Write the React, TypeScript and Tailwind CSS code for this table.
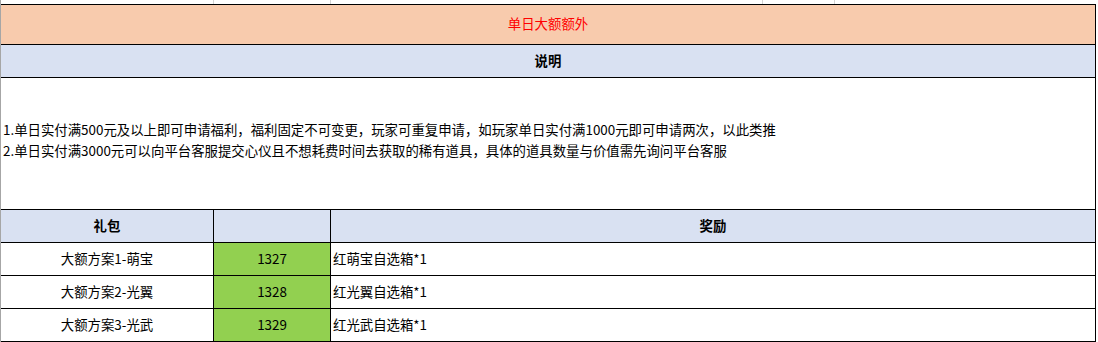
const rows = [
  { name: '大额方案1-萌宝', id: '1327', reward: '红萌宝自选箱*1' },
  { name: '大额方案2-光翼', id: '1328', reward: '红光翼自选箱*1' },
  { name: '大额方案3-光武', id: '1329', reward: '红光武自选箱*1' },
];

export default function App() {
  return (
    <div
      className="w-[1098px] h-[342px] bg-white border-l border-[#a6a6a6] text-[13.4px] text-black overflow-hidden"
      style={{ fontFamily: '"Microsoft YaHei", "Noto Sans CJK SC", "Noto Sans", sans-serif' }}
    >
      {/* sheet grid lines above the table */}
      <div className="flex h-[4px]">
        <div className="w-[213px] border-r border-[#d4d4d4]" />
        <div className="w-[117px] border-r border-[#d4d4d4]" />
        <div className="w-[432px] border-r border-[#d4d4d4]" />
        <div className="w-[72px] border-r border-[#d4d4d4]" />
      </div>

      <div className="w-[1095px] border-t border-r border-black">
        <div className="h-[40px] bg-[#f8cbad] border-b border-black flex items-center justify-center pb-[3px] text-[#ff0000]">
          单日大额额外
        </div>
        <div className="h-[33px] bg-[#d9e1f2] border-b border-black flex items-center justify-center pb-[2px] font-bold">
          说明
        </div>
        <div className="h-[132px] border-b border-black flex flex-col justify-center pl-[2px] pb-[8px] leading-[21px]">
          <div>1.单日实付满500元及以上即可申请福利，福利固定不可变更，玩家可重复申请，如玩家单日实付满1000元即可申请两次，以此类推</div>
          <div>2.单日实付满3000元可以向平台客服提交心仪且不想耗费时间去获取的稀有道具，具体的道具数量与价值需先询问平台客服</div>
        </div>

        <div className="flex h-[33px] bg-[#d9e1f2] border-b border-black font-bold">
          <div className="w-[213px] border-r border-black flex items-center justify-center pb-[2px]">礼包</div>
          <div className="w-[117px] border-r border-black" />
          <div className="flex-1 flex items-center justify-center pb-[2px]">奖励</div>
        </div>

        {rows.map((r) => (
          <div key={r.id} className="flex h-[33px] border-b border-black">
            <div className="w-[213px] border-r border-black flex items-center justify-center pb-[2px]">{r.name}</div>
            <div className="w-[117px] border-r border-black bg-[#92d050] flex items-center justify-center pb-[2px]">{r.id}</div>
            <div className="flex-1 flex items-center pl-[2px] pb-[2px]">{r.reward}</div>
          </div>
        ))}
      </div>
    </div>
  );
}
